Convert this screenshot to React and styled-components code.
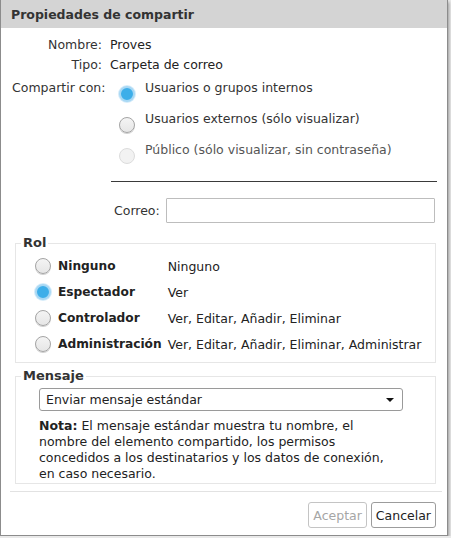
import React from "react";
import styled, { createGlobalStyle } from "styled-components";

const GlobalStyle = createGlobalStyle`
  html, body { margin: 0; padding: 0; }
  html { background: #e9e9e9; }
  body {
    font-family: "DejaVu Sans", "Noto Sans", sans-serif;
    font-size: 12.5px;
    color: #222;
  }
  * { box-sizing: border-box; }
`;

const Dialog = styled.div`
  width: 448px;
  background: #fff;
  border: 1px solid #8c8c8c;
  border-top: none;
  box-shadow: 1px 2px 3px rgba(0, 0, 0, 0.35);
  display: flex;
  flex-direction: column;
  padding-bottom: 7px;
`;

const Header = styled.div`
  height: 28px;
  background: #d4d4d4;
  display: flex;
  align-items: center;
  padding-left: 10px;
  font-weight: bold;
  font-size: 12.5px;
  color: #333;
`;

const Body = styled.div`
  padding-top: 7px;
  display: flex;
  flex-direction: column;
`;

const InfoRow = styled.div`
  display: grid;
  grid-template-columns: 90px 1fr;
  column-gap: 8px;
  padding-left: 11px;
  line-height: ${(p) => (p.$tall ? "19px" : "20px")};
  margin-top: ${(p) => p.$gap || 0}px;
`;

const Label = styled.div`
  text-align: right;
  color: #333;
  white-space: nowrap;
`;

const OptionList = styled.div`
  display: flex;
  flex-direction: column;
`;

const Option = styled.div`
  height: 31px;
  display: flex;
  align-items: flex-start;
  gap: 10px;
  padding-left: 9px;
  color: ${(p) => (p.$disabled ? "#555" : "#333")};
`;

const Radio = styled.span`
  flex: none;
  width: 16px;
  height: 16px;
  border-radius: 50%;
  margin-top: ${(p) => p.$offset || 0}px;
  ${(p) =>
    p.$checked
      ? `background: #3daee9; border: 2px solid #a8d8f4; box-shadow: 0 0 0 1px #d6ecfa;`
      : p.$disabled
      ? `background: #f2f2f2; border: 1px solid #dcdcdc;`
      : `background: linear-gradient(#f4f4f4, #e6e6e6); border: 1px solid #a4a4a4; box-shadow: 0 1px 0 #d0d0d0;`}
`;

const Divider = styled.div`
  margin: 10px 10px 0 110px;
  border-top: 1px solid #3a3a3a;
`;

const MailRow = styled.div`
  margin-top: 16px;
  padding-left: 113px;
  display: flex;
  align-items: center;
  gap: 6px;
  color: #333;
`;

const TextInput = styled.input`
  width: 269px;
  height: 25px;
  border: 1px solid #bdbdbd;
  border-radius: 1px;
  background: #fff;
  font: inherit;
  outline: none;
`;

const Group = styled.fieldset`
  margin: ${(p) => p.$top}px 11px 0 14px;
  padding: 0;
  border: 1px solid #e6e6e6;
  min-width: 0;
`;

const Legend = styled.legend`
  padding: 0 2px;
  margin-left: 5px;
  font-weight: bold;
  font-size: 13px;
  line-height: 16px;
  color: #333;
`;

const GroupBody = styled.div`
  padding: ${(p) => p.$pt}px 0 ${(p) => p.$pb}px ${(p) => p.$pl}px;
`;

const RoleTable = styled.div`
  display: grid;
  grid-template-columns: 16px auto 1fr;
  grid-auto-rows: 26px;
  align-items: center;
`;

const RoleRow = styled.div`
  display: contents;
`;

const RoleName = styled.div`
  font-weight: bold;
  font-size: 12.2px;
  color: #222;
  padding: 0 6px 0 7px;
  white-space: nowrap;
`;

const RoleDesc = styled.div`
  color: #222;
  white-space: nowrap;
`;

const Select = styled.div`
  width: 364px;
  height: 23px;
  border: 1px solid #9a9a9a;
  border-radius: 3px;
  background: #fff;
  display: flex;
  align-items: center;
  justify-content: space-between;
  padding: 0 8px 0 6px;
  color: #222;
`;

const Arrow = styled.span`
  width: 0;
  height: 0;
  border-left: 4px solid transparent;
  border-right: 4px solid transparent;
  border-top: 4px solid #111;
`;

const Note = styled.div`
  margin: 7px 0 0 0;
  width: 352px;
  line-height: 16px;
  color: #222;
`;

const NoteTag = styled.b`
  font-weight: bold;
`;

const Separator = styled.div`
  margin: 7px 5px 0 9px;
  border-top: 1px solid #e2e2e2;
`;

const Footer = styled.div`
  margin-top: 10px;
  display: flex;
  justify-content: flex-end;
  gap: 4px;
  padding-right: 11px;
`;

const Button = styled.button`
  height: 26px;
  padding: 0 4px;
  border-radius: 3px;
  background: #fff;
  font: inherit;
  font-size: 12.5px;
  border: 1px solid ${(p) => (p.disabled ? "#c4c4c4" : "#9c9c9c")};
  color: ${(p) => (p.disabled ? "#a6a6a6" : "#222")};
`;

const roles = [
  { name: "Ninguno", desc: "Ninguno" },
  { name: "Espectador", desc: "Ver", checked: true },
  { name: "Controlador", desc: "Ver, Editar, Añadir, Eliminar" },
  { name: "Administración", desc: "Ver, Editar, Añadir, Eliminar, Administrar" },
];

const shareOptions = [
  { text: "Usuarios o grupos internos", checked: true },
  { text: "Usuarios externos (sólo visualizar)" },
  { text: "Público (sólo visualizar, sin contraseña)", disabled: true },
];

export default function App() {
  return (
    <>
      <GlobalStyle />
      <Dialog>
        <Header>Propiedades de compartir</Header>
        <Body>
          <InfoRow>
            <Label>Nombre:</Label>
            <div>Proves</div>
          </InfoRow>
          <InfoRow>
            <Label>Tipo:</Label>
            <div>Carpeta de correo</div>
          </InfoRow>
          <InfoRow $tall $gap={3}>
            <Label>Compartir con:</Label>
            <OptionList>
              {shareOptions.map((o) => (
                <Option key={o.text} $disabled={o.disabled}>
                  <Radio $offset={8} $checked={o.checked} $disabled={o.disabled} />
                  <span>{o.text}</span>
                </Option>
              ))}
            </OptionList>
          </InfoRow>
          <Divider />
          <MailRow>
            <span>Correo:</span>
            <TextInput type="text" />
          </MailRow>

          <Group $top={12}>
            <Legend>Rol</Legend>
            <GroupBody $pt={2} $pb={5} $pl={19}>
              <RoleTable>
                {roles.map((r) => (
                  <RoleRow key={r.name}>
                    <Radio $checked={r.checked} />
                    <RoleName>{r.name}</RoleName>
                    <RoleDesc>{r.desc}</RoleDesc>
                  </RoleRow>
                ))}
              </RoleTable>
            </GroupBody>
          </Group>

          <Group $top={5}>
            <Legend>Mensaje</Legend>
            <GroupBody $pt={4} $pb={1} $pl={23}>
              <Select>
                <span>Enviar mensaje estándar</span>
                <Arrow />
              </Select>
              <Note>
                <NoteTag>Nota:</NoteTag> El mensaje estándar muestra tu nombre,
                el nombre del elemento compartido, los permisos concedidos a los
                destinatarios y los datos de conexión, en caso necesario.
              </Note>
            </GroupBody>
          </Group>

          <Separator />
          <Footer>
            <Button disabled>Aceptar</Button>
            <Button>Cancelar</Button>
          </Footer>
        </Body>
      </Dialog>
    </>
  );
}
